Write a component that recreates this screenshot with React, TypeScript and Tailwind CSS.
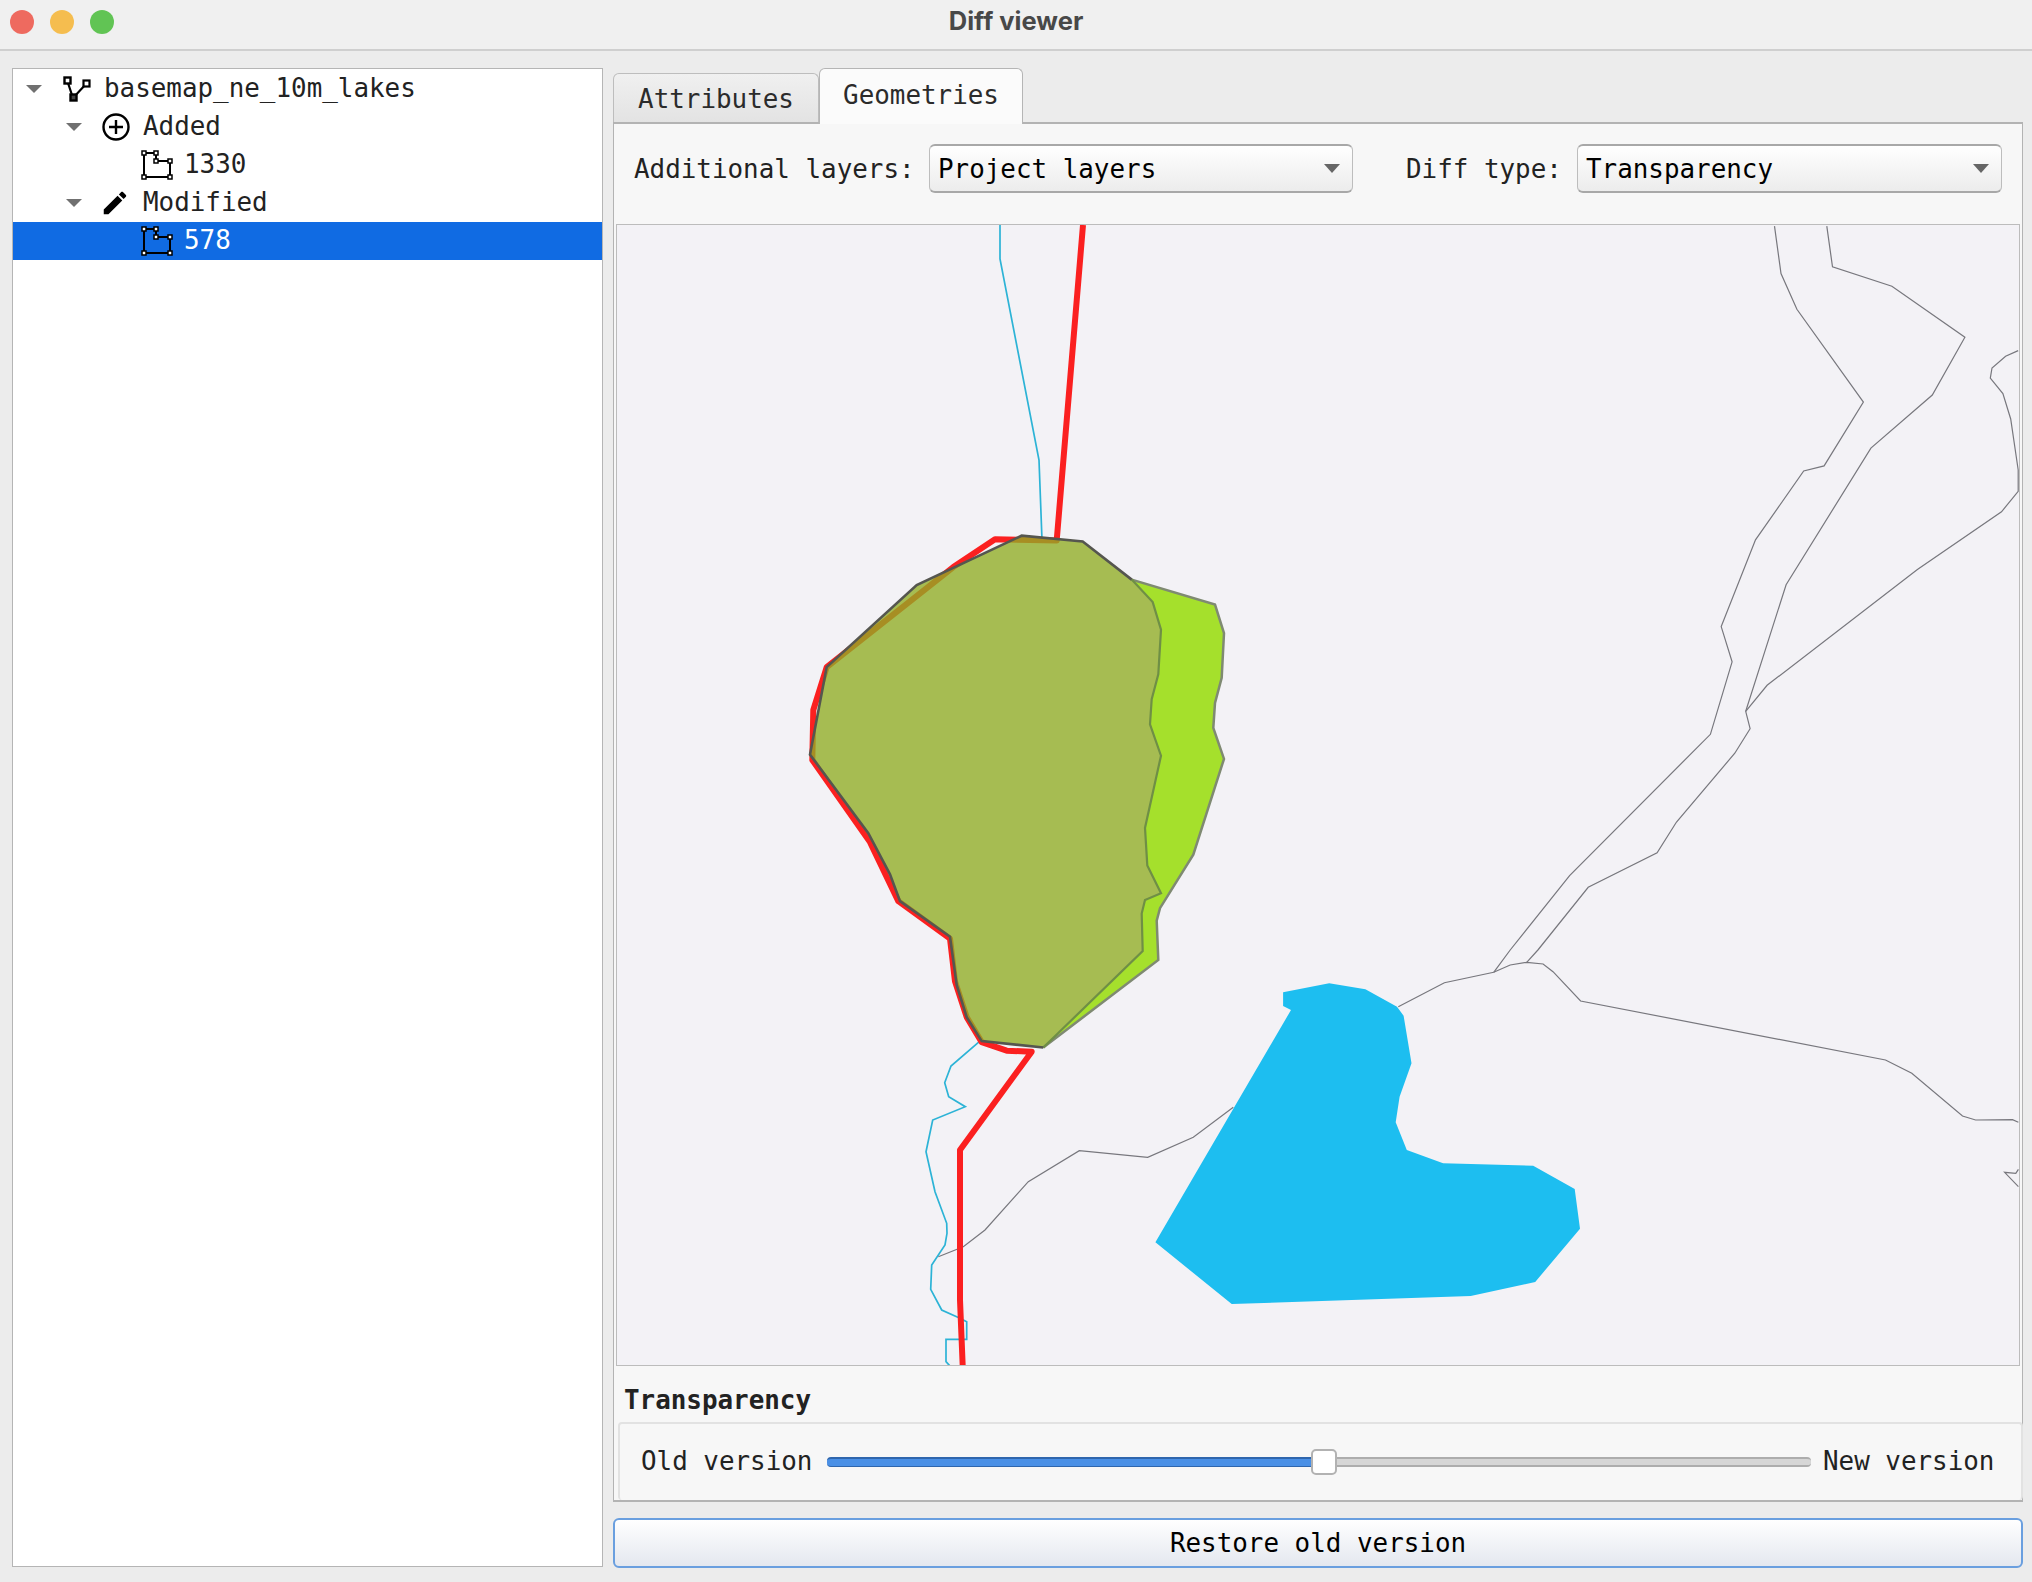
import type { ReactNode } from 'react';

const MONO = "font-['DejaVu_Sans_Mono','Liberation_Mono',monospace]";

type Pt = [number, number];

// traced from crops of the map, each with its own scale
const crop = (ox: number, oy: number, sx: number, sy: number) => (pts: Pt[]) =>
  pts.map(([x, y]) => `${(ox + x / sx).toFixed(1)},${(oy + y / sy).toFixed(1)}`).join(' ');
const lake = crop(780, 510, 3, 2.8);
const south = crop(880, 1000, 3, 3);
const east = crop(1500, 220, 2.947, 1.96);
const mid = crop(1000, 950, 1.519, 3);

const OLD_EDGE_RIGHT: Pt[] = [[1055, 195], [1118, 258], [1143, 335], [1135, 460], [1115, 530], [1110, 600], [1143, 688], [1095, 890], [1102, 995], [1143, 1073], [1095, 1092], [1085, 1130], [1088, 1235], [790, 1505]];
const OLD_EDGE_LEFT: Pt[] = [[790, 1505], [605, 1487], [560, 1420], [530, 1330], [510, 1195], [360, 1095], [330, 1020], [265, 905], [90, 685], [140, 440], [410, 210], [725, 72], [908, 88], [1055, 195]];
const NEW_EDGE: Pt[] = [[1055, 195], [1305, 265], [1332, 345], [1325, 470], [1305, 540], [1300, 610], [1332, 697], [1240, 965], [1140, 1115], [1130, 1150], [1135, 1260], [790, 1505]];

const RED_TOP = [
  '1083,225',
  lake([[830, 85], [645, 82], [520, 160], [140, 440], [100, 560], [97, 700], [270, 930], [355, 1095], [510, 1200], [525, 1320], [560, 1420], [605, 1490]]),
  south([[380, 152], [455, 155], [240, 450], [240, 900], [248, 1098]]),
].join(' ');

const CYAN_NORTH = '1000,225 1000,259 1039,460 1042,540';
const CYAN_SOUTH = south([[298, 125], [213, 198], [194, 248], [206, 290], [256, 320], [158, 360], [138, 455], [165, 575], [200, 670], [201, 700], [195, 735], [155, 795], [152, 868], [185, 930], [240, 955], [260, 965], [260, 1018], [198, 1018], [198, 1085], [210, 1098]]);

const GRAY_LINES = [
  south([[175, 770], [250, 740], [315, 690], [445, 545], [598, 452], [803, 472], [940, 412], [1060, 322]]),
  mid([[605, 170], [675, 98], [750, 67], [775, 45], [800, 37], [825, 42], [840, 65], [882, 153], [1345, 330], [1385, 370], [1462, 498], [1482, 510], [1538, 509], [1547, 517]]),
  mid([[1547, 658], [1543, 670], [1526, 667], [1547, 710]]),
  mid([[750, 67], [775, 0]]) + ' ' + east([[205, 1285], [620, 1008], [684, 866], [652, 797], [753, 627], [895, 492], [955, 482], [1071, 357], [875, 175], [828, 105], [809, 12]]),
  mid([[800, 37], [817, 0]]) + ' ' + east([[260, 1308], [463, 1240], [520, 1180], [692, 1045], [737, 997], [724, 963], [843, 715], [1093, 447], [1274, 343], [1370, 230], [1155, 130], [980, 92], [963, 12]]),
  east([[724, 963], [787, 912], [1230, 685], [1478, 572], [1527, 532], [1527, 490], [1505, 390], [1482, 340], [1445, 310], [1450, 290], [1490, 267], [1527, 256]]),
];

const CYAN_LAKE = mid([[430, 127], [500, 100], [555, 118], [603, 170], [613, 197], [625, 340], [607, 440], [601, 517], [618, 600], [673, 640], [810, 647], [873, 717], [881, 836], [813, 996], [715, 1038], [352, 1062], [236, 877], [442, 180], [430, 168]]);

function Caret() {
  return <span className="w-0 h-0 border-x-[8px] border-x-transparent border-t-[8px] border-t-[#707070]" />;
}

function LayerIcon() {
  return (
    <svg width="28" height="26" viewBox="0 0 28 26" className="block">
      <path d="M4 4 L10 22 L24 7" fill="none" stroke="#000" strokeWidth="2.2" />
      <rect x="1.5" y="1.5" width="6" height="6" fill="#fff" stroke="#000" strokeWidth="2.4" />
      <rect x="20.5" y="4.5" width="6" height="6" fill="#fff" stroke="#000" strokeWidth="2.2" />
      <rect x="7.5" y="18.5" width="6" height="6" fill="#444" stroke="#000" strokeWidth="2.4" />
    </svg>
  );
}

function AddedIcon() {
  return (
    <svg width="28" height="28" viewBox="0 0 28 28" className="block">
      <circle cx="14" cy="14" r="12.5" fill="none" stroke="#000" strokeWidth="2.4" />
      <path d="M14 7 V21 M7 14 H21" stroke="#000" strokeWidth="2.4" />
    </svg>
  );
}

function EditIcon() {
  return (
    <svg width="30" height="30" viewBox="0 0 24 24" className="block">
      <path d="M3 17.25V21h3.75L17.81 9.94l-3.75-3.75L3 17.25zM20.71 7.04c.39-.39.39-1.02 0-1.41l-2.34-2.34c-.39-.39-1.02-.39-1.41 0l-1.83 1.83 3.75 3.75 1.83-1.83z" fill="#000" />
    </svg>
  );
}

function PolygonIcon() {
  const verts: Pt[] = [[3, 3], [15, 3], [15, 11], [29, 11], [29, 27], [3, 27]];
  return (
    <svg width="32" height="30" viewBox="0 0 32 30" className="block">
      <polygon points={verts.map(v => v.join(',')).join(' ')} fill="none" stroke="#000" strokeWidth="2" />
      {verts.map(([x, y]) => (
        <rect key={`${x}-${y}`} x={x - 2} y={y - 2} width="4" height="4" fill="#fff" stroke="#000" strokeWidth="1.5" />
      ))}
    </svg>
  );
}

function TreeRow({ indent, caret, icon, label, selected }: { indent: string; caret?: boolean; icon: ReactNode; label: string; selected?: boolean }) {
  return (
    <div className={`flex items-center h-[38px] ${indent} ${selected ? 'bg-[#106be3] text-white' : 'text-[#222]'}`}>
      <span className="w-[16px] flex justify-center">{caret && <Caret />}</span>
      {icon}
      <span className="whitespace-pre">{label}</span>
    </div>
  );
}

function Combo({ value, width }: { value: string; width: string }) {
  return (
    <div className={`${width} h-[49px] flex items-center justify-between pl-[8px] pr-[12px] rounded-md border border-[#bdbdbd] border-t-2 border-t-[#a8a8a8] border-b-2 border-b-[#a8a8a8] bg-gradient-to-b from-white to-[#ececec] text-black`}>
      <span className="pt-[3px]">{value}</span>
      <span className="w-0 h-0 border-x-[8px] border-x-transparent border-t-[9px] border-t-[#666]" />
    </div>
  );
}

export default function App() {
  return (
    <div className={`w-[2032px] h-[1582px] flex flex-col bg-[#ececec] overflow-hidden text-[25.9px] leading-none ${MONO}`}>
      <div className="relative h-[51px] shrink-0 flex items-center justify-center bg-[#f0f0f0] border-b-2 border-[#cfcfcf]">
        <div className="absolute left-[10px] top-[10px] flex gap-[16px]">
          <span className="w-[24px] h-[24px] rounded-full bg-[#ee6a5f]" />
          <span className="w-[24px] h-[24px] rounded-full bg-[#f5bd4f]" />
          <span className="w-[24px] h-[24px] rounded-full bg-[#61c454]" />
        </div>
        <span className="font-['Inter',sans-serif] font-bold text-[25.5px] text-[#484848] pb-[7px]">Diff viewer</span>
      </div>

      <div className="flex-1 flex pt-[17px] pb-[14px] pl-[12px] pr-[9px] gap-[10px] min-h-0">
        <div className="w-[591px] h-[1499px] bg-white border border-[#b5b5b5] pt-[1px]">
          <TreeRow indent="pl-[13px]" caret icon={<span className="ml-[21px] mr-[13px]"><LayerIcon /></span>} label="basemap_ne_10m_lakes" />
          <TreeRow indent="pl-[53px]" caret icon={<span className="ml-[20px] mr-[13px]"><AddedIcon /></span>} label="Added" />
          <TreeRow indent="pl-[53px]" icon={<span className="ml-[59px] mr-[11px]"><PolygonIcon /></span>} label="1330" />
          <TreeRow indent="pl-[53px]" caret icon={<span className="ml-[18px] mr-[13px]"><EditIcon /></span>} label="Modified" />
          <TreeRow indent="pl-[53px]" selected icon={<span className="ml-[59px] mr-[11px]"><PolygonIcon /></span>} label="578" />
        </div>

        <div className="flex-1 flex flex-col min-w-0">
          <div className="h-[54px] flex items-end shrink-0 text-[#2b2b2b]">
            <div className="w-[206px] h-[49px] flex items-center justify-center pt-[3px] rounded-t-md border border-[#bdbdbd] border-b-0 bg-gradient-to-b from-[#f0f0f0] to-[#e3e3e3]">Attributes</div>
            <div className="w-[204px] h-[56px] flex items-center justify-center pb-[2px] rounded-t-md border border-[#b5b5b5] border-b-0 bg-[#fbfbfb] -mb-[2px] relative">Geometries</div>
          </div>

          <div className="h-[1380px] shrink-0 flex flex-col bg-[#f7f7f7] border border-[#b3b3b3] border-t-2 border-b-2">
            <div className="h-[100px] shrink-0 flex items-start pt-[20px] pl-[20px] text-[#222]">
              <div className="flex items-center h-[49px]">
                <span className="w-[295px] pt-[2px]">Additional layers:</span>
                <Combo value="Project layers" width="w-[424px]" />
                <span className="ml-[53px] w-[171px] pt-[2px]">Diff type:</span>
                <Combo value="Transparency" width="w-[425px]" />
              </div>
            </div>

            <div className="ml-[2px] w-[1404px] h-[1142px] shrink-0 border border-[#bcbcbc] bg-[#f3f2f6]">
              <svg width="1402" height="1140" viewBox="617 225 1402 1140" className="block">
                {GRAY_LINES.map(points => (
                  <polyline key={points} points={points} fill="none" stroke="#77777d" strokeWidth="1.2" />
                ))}
                <polyline points={CYAN_NORTH} fill="none" stroke="#2cb3d6" strokeWidth="1.7" />
                <polyline points={CYAN_SOUTH} fill="none" stroke="#2cb3d6" strokeWidth="1.7" />
                <polygon points={CYAN_LAKE} fill="#1dbef0" />
                <polyline points={RED_TOP} fill="none" stroke="#fb2020" strokeWidth="6" strokeLinejoin="round" />
                <polygon points={lake([...NEW_EDGE, ...[...OLD_EDGE_RIGHT].reverse()])} fill="#a5e02c" />
                <polygon points={lake([...OLD_EDGE_RIGHT, ...OLD_EDGE_LEFT])} fill="#8fad24" fillOpacity="0.78" />
                <polyline points={lake(NEW_EDGE)} fill="none" stroke="#7f8a72" strokeWidth="2.5" />
                <polyline points={lake(OLD_EDGE_RIGHT)} fill="none" stroke="#6f8f45" strokeWidth="2.2" />
                <polyline points={lake(OLD_EDGE_LEFT)} fill="none" stroke="#55564f" strokeWidth="2.6" />
              </svg>
            </div>

            <div className="flex-1 flex flex-col">
              <div className="h-[56px] shrink-0 flex items-center pl-[10px] pt-[14px] font-bold text-[#222]">Transparency</div>
              <div className="flex-1 ml-[4px] -mr-[1px] flex items-center pl-[21px] border-2 border-b-0 border-[#e2e2e2] rounded-sm text-[#222]">
                <span className="w-[186px]">Old version</span>
                <div className="w-[984px] flex items-center">
                  <div className="w-[484px] h-[10px] rounded-l-sm border-t-2 border-b border-t-[#2f66ad] border-b-[#2f66ad] bg-[#4a90e6]" />
                  <div className="w-[26px] h-[26px] rounded-[5px] border-2 border-[#b2b2b2] bg-white" />
                  <div className="flex-1 h-[10px] rounded-r-sm border-y-2 border-y-[#adadad] bg-[#d6d6d6]" />
                </div>
                <span className="ml-[12px]">New version</span>
              </div>
            </div>
          </div>

          <button type="button" className="mt-[16px] h-[50px] shrink-0 pt-[2px] rounded-md border-2 border-[#6a9fdf] bg-gradient-to-b from-white to-[#e4e8ef] text-black">
            Restore old version
          </button>
        </div>
      </div>
    </div>
  );
}
